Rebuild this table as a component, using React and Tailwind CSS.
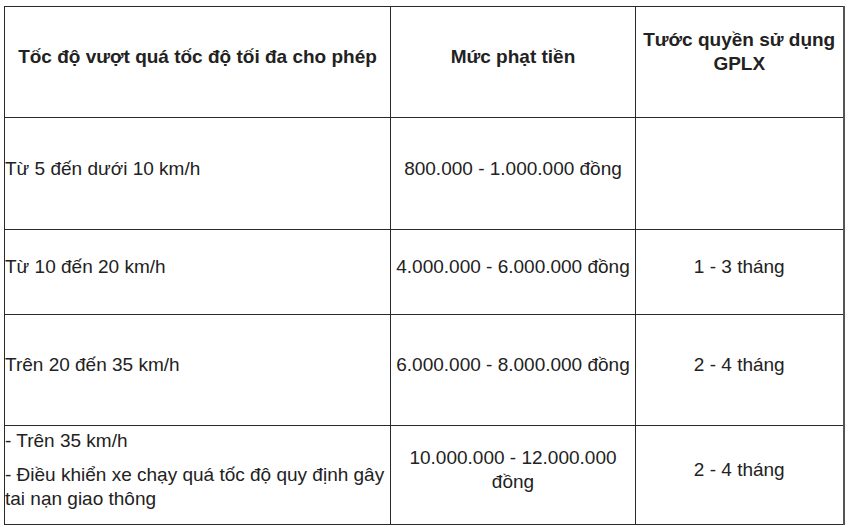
const rows = [
  {
    speed: ['Từ 5 đến dưới 10 km/h'],
    fine: '800.000 - 1.000.000 đồng',
    license: '',
    h: 'h-[112px]',
  },
  {
    speed: ['Từ 10 đến 20 km/h'],
    fine: '4.000.000 - 6.000.000 đồng',
    license: '1 - 3 tháng',
    h: 'h-[85px]',
  },
  {
    speed: ['Trên 20 đến 35 km/h'],
    fine: '6.000.000 - 8.000.000 đồng',
    license: '2 - 4 tháng',
    h: 'h-[111px]',
  },
  {
    speed: ['- Trên 35 km/h', '- Điều khiển xe chạy quá tốc độ quy định gây tai nạn giao thông'],
    fine: '10.000.000 - 12.000.000 đồng',
    license: '2 - 4 tháng',
    h: 'h-[99px]',
  },
];

export default function App() {
  return (
    <div className="bg-white w-[850px] h-[527px] pt-[6px] pl-[4px] font-['Liberation_Sans',Arial,sans-serif] text-[#222] text-[19px] leading-[24px]">
      <table className="w-[839px] border-collapse table-fixed">
        <colgroup>
          <col className="w-[386px]" />
          <col className="w-[245px]" />
          <col className="w-[208px]" />
        </colgroup>
        <thead>
          <tr className="h-[111px]">
            <th className="border border-[#2a2a2a] font-bold text-center align-middle px-[4px]">
              <p className="mb-[10px]">Tốc độ vượt quá tốc độ tối đa cho phép</p>
            </th>
            <th className="border border-[#2a2a2a] font-bold text-center align-middle">
              <p className="mb-[10px]">Mức phạt tiền</p>
            </th>
            <th className="border border-[#2a2a2a] border-r-2 border-r-[#555] font-bold text-center align-middle">
              <p className="mb-[20px]">Tước quyền sử dụng GPLX</p>
            </th>
          </tr>
        </thead>
        <tbody>
          {rows.map((row, i) => (
            <tr key={i} className={row.h}>
              <td className="border border-[#2a2a2a] align-middle">
                {row.speed.map((line, j) => (
                  <p key={j} className="mb-[10px]">{line}</p>
                ))}
              </td>
              <td className="border border-[#2a2a2a] text-center align-middle px-[2px]">
                <p className="mb-[10px]">{row.fine}</p>
              </td>
              <td className="border border-[#2a2a2a] border-r-2 border-r-[#555] text-center align-middle">
                <p className="mb-[10px]">{row.license}</p>
              </td>
            </tr>
          ))}
        </tbody>
      </table>
    </div>
  );
}
